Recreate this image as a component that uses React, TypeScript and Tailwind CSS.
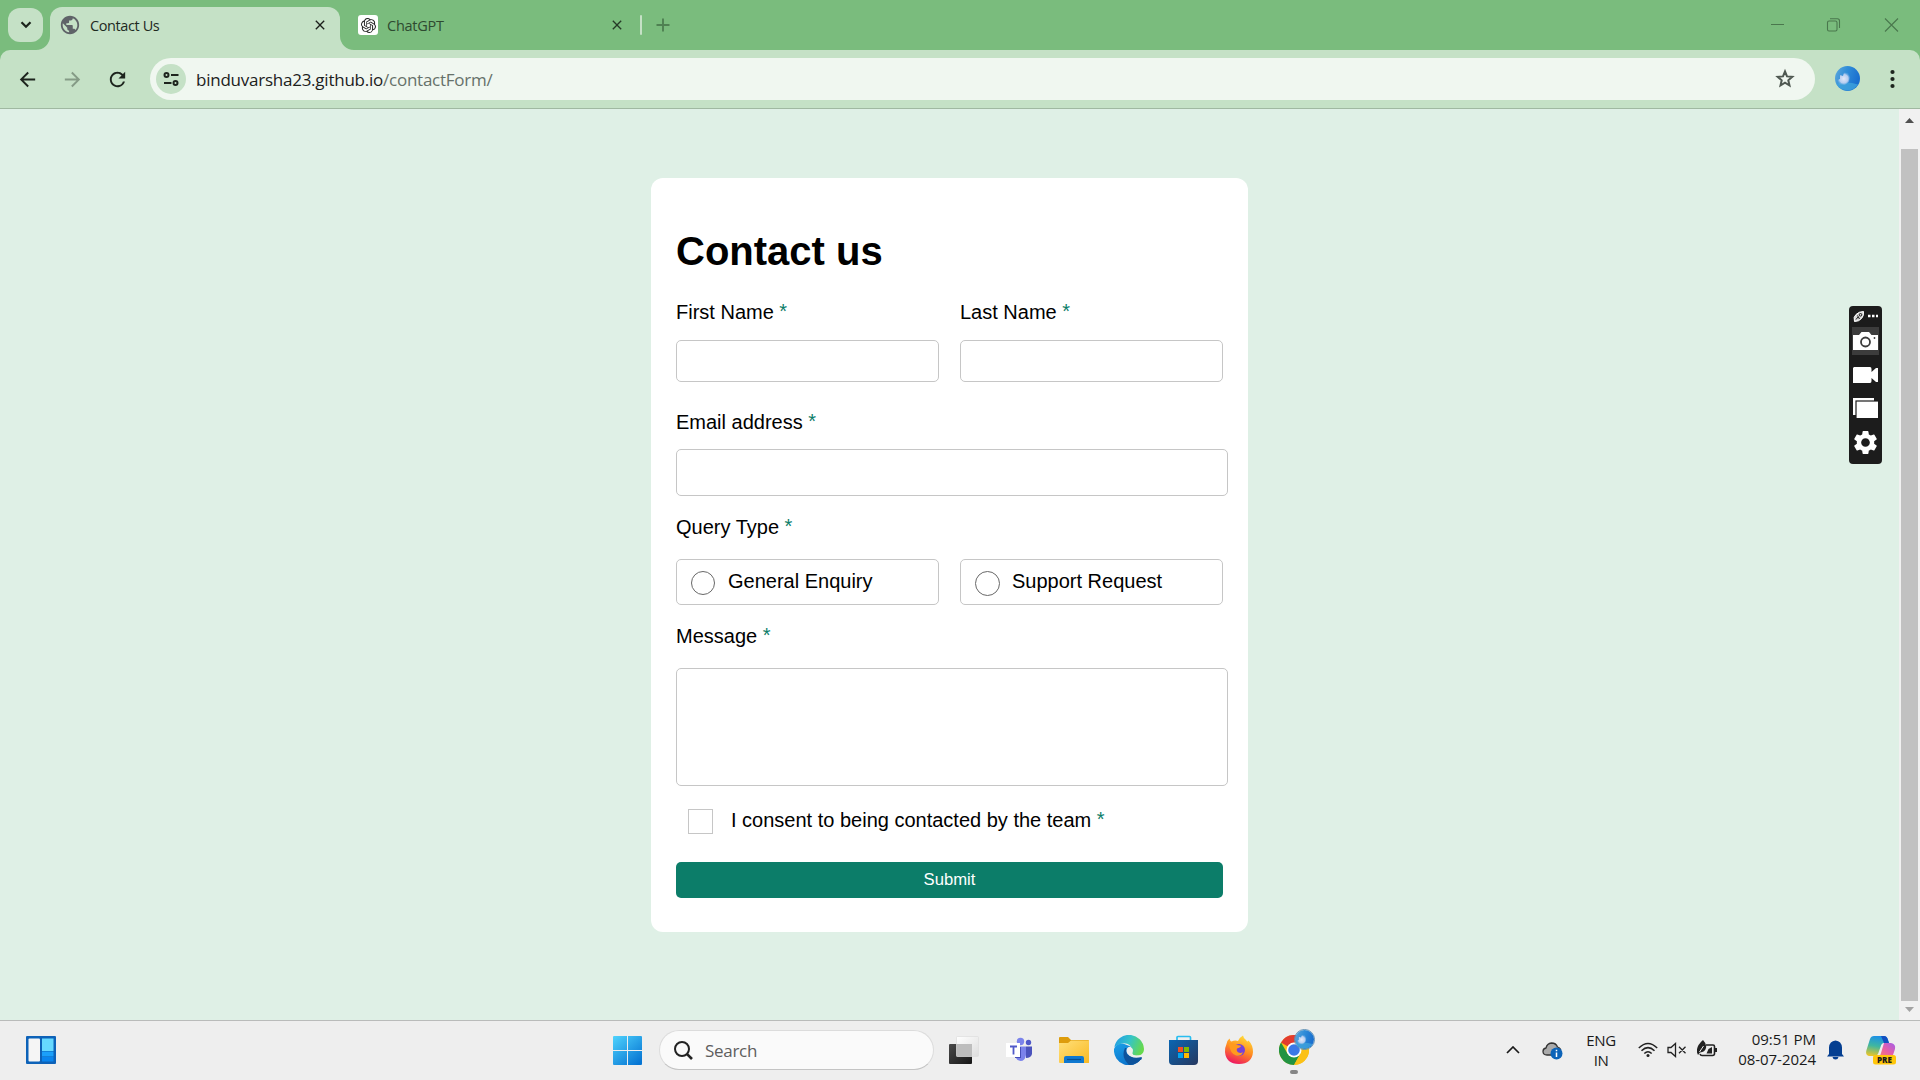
import React from "react";
import { MdPublic, MdArrowBack, MdArrowForward, MdRefresh, MdSettings, MdClose } from "react-icons/md";
import { SiOpenai } from "react-icons/si";

const ui = "font-['Open_Sans','Noto_Sans',sans-serif]";

function Avatar({ id, size }: { id: string; size: number }) {
  return (
    <svg width={size} height={size} viewBox="0 0 25 25">
      <defs>
        <linearGradient id={id} x1="0" y1="0" x2="1" y2="0.3">
          <stop offset="0" stopColor="#5ea9dc" />
          <stop offset="0.5" stopColor="#2f8cd8" />
          <stop offset="1" stopColor="#1a6fcf" />
        </linearGradient>
        <radialGradient id={id + "c"}>
          <stop offset="0" stopColor="#e3e8f8" />
          <stop offset="0.7" stopColor="#b6cdf0" />
          <stop offset="1" stopColor="#7fb6e6" stopOpacity=".3" />
        </radialGradient>
      </defs>
      <circle cx="12.5" cy="12.5" r="12.5" fill={`url(#${id})`} />
      <path d="M1.500 18Q12 15 23 18.500A12.5 12.5 0 0 1 1.500 18Z" fill="#3fa3dc" opacity=".8" />
      <path d="M5 9 8 10 9 6.500 13 7 15 11 14 16 10 19 4 18.500 2.500 14 5 13Z" fill={`url(#${id}c)`} />
    </svg>
  );
}

function TabStrip() {
  return (
    <div className="flex h-[50px] items-center bg-[#7abc7d] pl-2">
      <button className="flex h-[34px] w-[35px] items-center justify-center rounded-[12px] bg-[#c5e1c6]">
        <svg width="12" height="8" viewBox="0 0 12 8" fill="none" stroke="#1c241c" strokeWidth="2.2">
          <path d="M1.5 1.2 6 5.8 10.5 1.2" />
        </svg>
      </button>
      <div className="relative ml-[7px] flex h-[43px] w-[290px] items-center self-end rounded-t-[12px] bg-[#c5e1c6] pb-[7px] pl-[11px]">
        <svg className="absolute bottom-0 -left-[14px]" width="14" height="14">
          <path d="M14 0V14H0A14 14 0 0 0 14 0Z" fill="#c5e1c6" />
        </svg>
        <svg className="absolute -right-[14px] bottom-0" width="14" height="14">
          <path d="M0 0V14H14A14 14 0 0 1 0 0Z" fill="#c5e1c6" />
        </svg>
        <MdPublic className="-ml-[2px] size-[22px] text-[#5f6368]" />
        <span className={`${ui} mt-[2px] ml-[9px] w-[72px] text-[14.5px] leading-5 tracking-[-0.4px] whitespace-nowrap text-[#1e2a1f]`}>Contact Us</span>
        <MdClose className="ml-[150px] size-4 text-[#1b1f1b]" />
      </div>
      <div className="ml-[18px] flex size-5 items-center justify-center rounded-[3px] bg-white">
        <SiOpenai className="size-[15px] text-[#222]" />
      </div>
      <span className={`${ui} mt-[2px] ml-[9px] w-[61px] text-[14.5px] leading-5 tracking-[-0.25px] text-[#2e4a30]`}>ChatGPT</span>
      <MdClose className="ml-[161px] size-4 text-[#263a27]" />
      <div className="ml-[15px] h-5 w-[2px] rounded-full bg-[#c5e1c6]" />
      <svg className="ml-[13.5px]" width="14" height="14" stroke="#4f8152" strokeWidth="1.9">
        <path d="M7 .5V13.5M.5 7H13.5" />
      </svg>
      <svg className="mr-[21px] ml-auto" width="129" height="16" viewBox="0 0 129 16" fill="none" stroke="#4a774d" strokeWidth="1.1">
        <path d="M1 7.5H14M115 1.5 128 14.500M128 1.500 115 14.500" />
        <rect x="57.500" y="4" width="9.500" height="10" rx="1.500" />
        <path d="M60 1.700H67.500Q69.500 1.700 69.500 4V11" />
      </svg>
    </div>
  );
}

function Toolbar() {
  return (
    <div className="bg-[#7abc7d]">
      <div className="flex h-[59px] items-center rounded-t-[10px] border-b border-[#a0b8a1] bg-[#c5e1c6] pl-[16px]">
        <MdArrowBack className="size-[23px] text-[#1d241d]" />
        <MdArrowForward className="ml-[22px] size-[23px] text-[#859b86]" />
        <MdRefresh className="ml-[22px] size-[23px] text-[#1d241d]" />
        <div className="ml-[21px] flex h-[42px] w-[1665px] items-center rounded-full bg-[#f0f7f0] pr-[18px] pl-[6px]">
          <div className="flex size-[30px] items-center justify-center rounded-full bg-[#c5e1c6]">
            <svg width="18" height="16" viewBox="0 0 18 16" fill="none" stroke="#1d241d" strokeWidth="2">
              <circle cx="4.500" cy="4" r="2" />
              <path d="M9 4H16.500M2 12H9.500" />
              <circle cx="13.500" cy="12" r="2" />
            </svg>
          </div>
          <span className={`${ui} mt-px ml-[10px] flex-1 text-[17px] leading-6 tracking-[-0.24px] text-[#1c211c]`}>
            binduvarsha23.github.io<span className="text-[#66716a]">/contactForm/</span>
          </span>
          <svg width="24" height="24" viewBox="0 0 24 24" fill="none" stroke="#4f5851" strokeWidth="2">
            <path d="M12 4.500 14 9.400 19.300 9.850 15.300 13.300 16.500 18.500 12 15.750 7.500 18.500 8.700 13.300 4.700 9.850 10 9.400Z" />
          </svg>
        </div>
        <div className="-mt-px ml-[20px]">
          <Avatar id="top" size={25} />
        </div>
        <svg className="ml-[29px]" width="6" height="20" fill="#1d241d">
          <circle cx="3.500" cy="3" r="2.100" />
          <circle cx="3.500" cy="10" r="2.100" />
          <circle cx="3.500" cy="17" r="2.100" />
        </svg>
      </div>
    </div>
  );
}

function Label({ children }: { children: React.ReactNode }) {
  return (
    <div className="text-[20px] leading-[23px]">
      {children} <span className="inline-block -translate-y-px text-[#0c7d69]">*</span>
    </div>
  );
}

function ContactForm() {
  return (
    <form className="mt-[69px] ml-[651px] h-[754px] w-[597px] shrink-0 rounded-[12px] bg-white px-[25px] pt-[50px] font-['Liberation_Sans',Arial,sans-serif] text-black">
      <h1 className="text-[40px] leading-[46px] font-bold">Contact us</h1>
      <div className="mt-[27px] grid grid-cols-2 gap-x-[21px]">
        <Label>First Name</Label>
        <Label>Last Name</Label>
        <div className="mt-4 h-[42px] rounded-[5px] border border-[#c6c6c6]" />
        <div className="mt-4 h-[42px] rounded-[5px] border border-[#c6c6c6]" />
      </div>
      <div className="mt-[29px]">
        <Label>Email address</Label>
      </div>
      <div className="mt-[15px] h-[47px] w-[552px] rounded-[5px] border border-[#c6c6c6]" />
      <div className="mt-[20px]">
        <Label>Query Type</Label>
      </div>
      <div className="mt-[20px] grid grid-cols-2 gap-x-[21px] text-[20px] leading-[23px]">
        <div className="flex h-[46px] rounded-[5px] border border-[#c6c6c6] pt-[10px] pl-[14px]">
          <span className="mt-px size-[24px] rounded-full border border-[#686868]" />
          <span className="ml-[13px]">General Enquiry</span>
        </div>
        <div className="flex h-[46px] rounded-[5px] border border-[#c6c6c6] pt-[10px] pl-[14px]">
          <span className="mt-px size-[25px] rounded-full border border-[#686868]" />
          <span className="ml-[12px]">Support Request</span>
        </div>
      </div>
      <div className="mt-[20px]">
        <Label>Message</Label>
      </div>
      <div className="mt-[20px] h-[118px] w-[552px] rounded-[5px] border border-[#c6c6c6]" />
      <div className="mt-[23px] flex pl-[12px]">
        <span className="size-[25px] border border-[#c6c6c6]" />
        <div className="ml-[18px]">
          <Label>I consent to being contacted by the team</Label>
        </div>
      </div>
      <div className="mt-[28px] flex h-[36px] items-center justify-center rounded-[5px] bg-[#0c7d69] text-[16.670px] text-white">
        <span className="-mt-[2px]">Submit</span>
      </div>
    </form>
  );
}

function CaptureBar() {
  return (
    <div className="absolute top-[197px] left-[1849px] flex h-[158px] w-[33px] flex-col items-center rounded-[4px] bg-[#1c1c1c]">
      <svg className="mt-[4px]" width="25" height="13" fill="none" stroke="#fff">
        <path d="M1.500 11.500Q0 7 3 4.500Q6 1.500 10.500 1.500Q11 6 8.500 8.500Q6 11.500 1.500 11.500Z" fill="#d8d8d8" strokeWidth="1" />
        <path d="M3 9.500 5 7M6.500 9 4.500 5.500" stroke="#1c1c1c" strokeWidth="1" />
        <circle cx="7.500" cy="4.800" r="1.300" stroke="#1c1c1c" />
        <path d="M15 6h2.500M19 6h2.500M23 6h2" strokeWidth="2.500" />
      </svg>
      <div className="mt-[4px] flex h-[28px] w-[27px] justify-center bg-[#3c3c3c] pt-[5px]">
        <svg width="25" height="18">
          <path d="M0 3H6L8.500 0H16L18.500 3H25V18H0Z" fill="#fff" />
          <circle cx="12.500" cy="10" r="4.500" fill="#fff" stroke="#3c3c3c" strokeWidth="1.800" />
          <circle cx="21.500" cy="6" r=".9" fill="#3c3c3c" />
        </svg>
      </div>
      <svg className="mt-[12px]" width="25" height="16" fill="#fff">
        <path d="M1 0H17Q18.500 0 18.500 2V5L23 1H25V15H23L18.500 11V14Q18.500 16 17 16H0V1Z" />
      </svg>
      <svg className="mt-[15px]" width="25" height="20">
        <rect width="21" height="17" fill="#fff" />
        <rect x="3" y="3" width="23" height="18" fill="#fff" stroke="#1c1c1c" strokeWidth="1.200" />
      </svg>
      <MdSettings className="mt-[10px] size-[29px] text-white" />
    </div>
  );
}

function Scrollbar() {
  return (
    <div className="ml-auto flex w-[21px] flex-col items-center bg-[#f1f1f1] py-[9px]">
      <svg width="9" height="5" className="shrink-0 fill-[#505050]">
        <path d="M4.500 0 9 5H0Z" />
      </svg>
      <div className="mt-[26px] h-[852px] w-[17px] shrink-0 bg-[#c1c1c1]" />
      <svg width="9" height="5" className="mt-[6px] shrink-0 fill-[#a3a3a3]">
        <path d="M4.500 5 0 0H9Z" />
      </svg>
    </div>
  );
}

function AppIcons() {
  return (
    <>
      <svg className="ml-[16px]" width="30" height="30">
        <defs>
          <linearGradient id="tvd" x1="0" y1="0" x2="1" y2="1"><stop stopColor="#4a4a4a" /><stop offset="1" stopColor="#161616" /></linearGradient>
          <linearGradient id="tvl" x1="0" y1="0" x2="1" y2="1"><stop stopColor="#fff" /><stop offset="1" stopColor="#ddd" /></linearGradient>
        </defs>
        <rect x="0" y="9" width="23" height="20" rx="1" fill="url(#tvd)" />
        <rect x="7.500" y="1.500" width="22" height="20" rx="1" fill="url(#tvl)" stroke="#ddd" strokeWidth=".7" />
        <rect x="7.500" y="9" width="15.500" height="12.500" fill="#bdbdbd" />
      </svg>
      <svg className="ml-[27px]" width="26" height="30">
        <circle cx="14.500" cy="6.500" r="3.700" fill="#7b83eb" />
        <circle cx="22.500" cy="7.500" r="2.700" fill="#5059c9" />
        <path d="M20 11.500H26V19Q25 23 20 23Z" fill="#4b53bc" />
        <path d="M9 11.500H20V20Q19 26 14.500 26Q10 26 9 20Z" fill="#7b83eb" />
        <path d="M14 12V22H9" stroke="#464eb8" strokeWidth="2" fill="none" />
        <rect x="0" y="8" width="14" height="14" fill="#fff" />
        <path d="M4 11.500H11M7.500 11.500V19.500" stroke="#5059c9" strokeWidth="1.800" />
      </svg>
      <svg className="ml-[27px]" width="30" height="30">
        <defs><linearGradient id="fold" x1="0" y1="0" x2="1" y2="1"><stop stopColor="#ffe07a" /><stop offset="1" stopColor="#f9b923" /></linearGradient></defs>
        <path d="M0 3Q0 2 1 2H9L12 5H29Q30 5 30 6V12H0Z" fill="#dd9c0c" />
        <path d="M0 8H9L12 5.500H30V27.500Q30 28 29 28H1Q0 28 0 27Z" fill="url(#fold)" />
        <path d="M5 28V23Q5 21 7 21H23Q25 21 25 23V28Z" fill="#0f78d0" />
        <path d="M8 24.500H22" stroke="#084f91" strokeWidth="1.200" />
      </svg>
      <svg className="ml-[25px]" width="30" height="30" viewBox="0 0 30 30">
        <defs>
          <linearGradient id="edge1" x1="0" y1=".2" x2="1" y2=".5"><stop stopColor="#219ce5" /><stop offset=".5" stopColor="#35c4c7" /><stop offset="1" stopColor="#67d94c" /></linearGradient>
          <linearGradient id="edge2" x1="0" y1="0" x2=".6" y2="1"><stop stopColor="#1aa0e8" /><stop offset="1" stopColor="#0b6fc8" /></linearGradient>
        </defs>
        <path d="M0 14Q2 8 9 8.500L18 12 16 20 27.500 23.500A15 15 0 0 1 0 14Z" fill="url(#edge2)" />
        <path d="M.3 12A15 15 0 0 1 30 14C30 19 26 21 22 20.500C18 20 17.500 18.500 18.500 17C19.500 12 14 7.500 8 8.500Q3 9.500 .3 12Z" fill="url(#edge1)" />
        <path d="M11 13Q6.500 22 15 29.900Q23 30.500 27.800 23Q20 25.500 15 21.500Q11.500 18 12.500 13Z" fill="#0d539c" />
        <path d="M12.500 15.500Q13 11.500 16.500 11.800Q19.800 14 18.500 17Q17.500 20 22 20.700L28 20.300 27.800 23Q21 25 16 21.500Q12.300 18.500 12.500 15.500Z" fill="#eee" />
        <path d="M13.500 19Q18 24.500 27.800 22L27.500 24.500Q18 28 13.500 20Z" fill="#0d539c" />
      </svg>
      <svg className="ml-[25px]" width="29" height="30">
        <defs><linearGradient id="store" x1="0" y1="0" x2="1" y2="1"><stop stopColor="#0a66b3" /><stop offset="1" stopColor="#26385f" /></linearGradient></defs>
        <path d="M8 6V2.500Q8 1.500 9 1.500H20.500Q21.500 1.500 21.500 2.500V6" fill="none" stroke="#28bdf0" strokeWidth="1.700" />
        <path d="M0 5H29V26Q29 30 25 30H4Q0 30 0 26Z" fill="url(#store)" />
        <rect x="9" y="12" width="5" height="5" fill="#f25022" />
        <rect x="15" y="12" width="5" height="5" fill="#7fba00" />
        <rect x="9" y="18" width="5" height="5" fill="#00a4ef" />
        <rect x="15" y="18" width="5" height="5" fill="#ffb900" />
      </svg>
      <svg className="ml-[27px]" width="28" height="30">
        <defs>
          <linearGradient id="fx" x1=".7" y1="0" x2=".3" y2="1"><stop stopColor="#ffdf3a" /><stop offset=".5" stopColor="#ff8a20" /><stop offset="1" stopColor="#ed1164" /></linearGradient>
        </defs>
        <path d="M1.500 9Q2 5.500 4.500 3.500Q5 6 6.500 6.500Q10 5 13 6Q15 2 18 .5Q18.500 3.500 21 5Q22 6.500 22.500 6.500L23.500 5.500Q28 10 28 17Q27 29 14 29Q1 29 0 17Q0 12 1.500 9Z" fill="url(#fx)" />
        <circle cx="14" cy="15" r="6" fill="#7542d8" />
        <path d="M4 9Q8 7 12 10Q16 10 16 11.500Q14 13 12 13.500Q11 16 13.500 17.500Q16 18.500 18 17Q16 22 11 20.500Q5 18.500 4 9Z" fill="#ff9b1e" />
      </svg>
      <div className="relative ml-[26px] h-[30px] w-[30px]">
        <svg width="30" height="30">
          <circle cx="15" cy="15" r="15" fill="#fbc116" />
          <path d="M15 15 2 7.500A15 15 0 0 1 28 7.500L15 7.500Z" fill="#e33b2e" />
          <path d="M2 7.500A15 15 0 0 0 15 30L21.500 18.500 15 15 8.500 18.500Z" fill="#229342" />
          <path d="M15 7.500H28A15 15 0 0 1 15 30L21.500 18.500Z" fill="#fbc116" />
          <circle cx="15" cy="15" r="7.500" fill="#fff" />
          <circle cx="15" cy="15" r="5.800" fill="#3b78e7" />
        </svg>
        <div className="absolute -top-[6px] left-[15px] rounded-full border border-[#5d8fb5]">
          <Avatar id="task" size={19} />
        </div>
        <div className="absolute top-[35px] left-[11px] h-[4px] w-[8px] rounded-full bg-[#858585]" />
      </div>
    </>
  );
}

function Tray() {
  return (
    <div className="ml-auto flex items-center text-[#1a1a1a]">
      <svg width="14" height="8" fill="none" stroke="#1a1a1a" strokeWidth="1.700"><path d="M1 7 7 1 13 7" /></svg>
      <svg className="ml-[22px]" width="21" height="20">
        <path d="M5 15Q1 15 1 11.500Q1 8.500 4 8Q5 3.500 9.500 3Q14 3 15.500 7Q19 8 18.500 11L14 15Z" fill="#aaa" stroke="#333" strokeWidth="1.300" />
        <circle cx="14.500" cy="13.500" r="6" fill="#0c63b8" />
        <path d="M14.500 12.500V17M14.500 9.800V11.300" stroke="#fff" strokeWidth="1.500" />
      </svg>
      <div className={`${ui} ml-[22px] w-[32px] text-center text-[15px] leading-[20px] tracking-[-0.4px]`}>
        ENG
        <br />
        IN
      </div>
      <svg className="ml-[21px]" width="20" height="16" fill="none" stroke="#222" strokeWidth="1.500">
        <path d="M.8 6Q10-3 19.200 6M3.500 8.800Q10 2.500 16.500 8.800M6.300 11.500Q10 8 13.700 11.500" />
        <circle cx="10" cy="13.500" r="1.500" fill="#222" stroke="none" />
      </svg>
      <svg className="ml-[9px]" width="20" height="16" fill="none" stroke="#222" strokeWidth="1.300">
        <path d="M1 5.500H4L8.500 1.500V14.500L4 10.500H1ZM12 4.800 18.500 11.300M18.500 4.800 12 11.300" />
      </svg>
      <svg className="-mt-[2px] ml-[10px]" width="21" height="18">
        <path d="M9 5H16Q17.500 5 17.500 6.500V13.500Q17.500 15.500 15.500 15.500H5Q3.500 15.500 3 14" fill="none" stroke="#222" strokeWidth="1.600" />
        <rect x="18" y="8" width="2" height="4" fill="#222" />
        <path d="M9.500 13.500 11.500 9 15 7V13.500Z" fill="#222" />
        <path d="M0 12.500Q-1 6 6 0Q10 4 9 8Q8 12 3 12.500L1 15Z" fill="#222" />
        <path d="M2.500 12 6.500 6" stroke="#eee" strokeWidth="1" />
      </svg>
      <div className={`${ui} -mt-[3px] ml-[14px] w-[84px] text-right text-[15px] leading-[20px] tracking-[-0.05px] whitespace-nowrap`}>
        09:51 PM
        <br />
        08-07-2024
      </div>
      <svg className="ml-[11px]" width="17" height="20" fill="#053f91">
        <path d="M2 14V7.500Q2.500 1 8.500 .5Q14.500 1 15 7.500V14L17 16.500H0ZM5.500 17H11.500Q11 19.500 8.500 19.500Q6 19.500 5.500 17Z" />
      </svg>
      <svg className="mr-[24px] ml-[22px]" width="30" height="30">
        <defs>
          <linearGradient id="cp1" x1=".5" y1="0" x2=".3" y2="1"><stop stopColor="#1b8fe8" /><stop offset=".5" stopColor="#3fb7a0" /><stop offset="1" stopColor="#e9c529" /></linearGradient>
          <linearGradient id="cp2" x1="1" y1="0" x2="0" y2="1"><stop stopColor="#a35de8" /><stop offset=".5" stopColor="#e95fa5" /><stop offset="1" stopColor="#fb8b5e" /></linearGradient>
        </defs>
        <path d="M8 1H18Q21 1 22 5L23 8H18Q15.500 8 14.500 12L12 19Q11 21 8 21H3Q-1 20 .5 15L4 4Q5 1 8 1Z" fill="url(#cp1)" />
        <path d="M15 1H18Q21 1 22 5L23 8H18Z" fill="#124fc0" />
        <path d="M18 8H25Q30 9 29 14L26 23H11Q14 22 15 18Z" fill="url(#cp2)" />
        <rect x="7" y="20" width="23" height="9.500" rx="2.500" fill="#ffc60a" />
        <text x="18.500" y="27.600" textAnchor="middle" fontFamily="Open Sans" fontWeight="800" fontSize="8" fill="#1a1a1a">PRE</text>
      </svg>
    </div>
  );
}

function Taskbar() {
  return (
    <div className="flex h-[60px] items-center border-t border-[#b9bbba] bg-[#eee] pb-px pl-[26px]">
      <svg width="30" height="28">
        <rect width="30" height="28" rx="1" fill="#0d62b8" />
        <rect x="2.500" y="2.500" width="11.500" height="23" rx="1" fill="#f5f5f5" />
        <rect x="16" y="2.500" width="11.500" height="12.500" fill="#66d9ff" />
        <rect x="16" y="15.500" width="11.500" height="5" fill="#1ba0fa" />
        <rect x="16" y="21" width="11.500" height="4.500" fill="#0a85ee" />
      </svg>
      <svg className="ml-[557px]" width="29" height="29">
        <defs><linearGradient id="win" gradientUnits="userSpaceOnUse" x1="0" y1="0" x2="24" y2="29"><stop stopColor="#4fd3fd" /><stop offset="1" stopColor="#0675d3" /></linearGradient></defs>
        <path d="M1 0H14V14H0V1Q0 0 1 0ZM15 0H28Q29 0 29 1V14H15ZM0 15H14V29H1Q0 29 0 28ZM15 15H29V28Q29 29 28 29H15Z" fill="url(#win)" />
      </svg>
      <div className="mr-[-1px] ml-[17px] flex h-[40px] w-[275px] items-center rounded-full border border-[#dcdcdc] border-b-[#c4c4c4] bg-[#fafafa] pl-[14px]">
        <svg width="19" height="19" fill="none" stroke="#222" strokeWidth="2">
          <circle cx="8" cy="8" r="7" />
          <path d="M12.800 12.800 18 18" strokeWidth="2.600" />
        </svg>
        <span className={`${ui} mt-[2px] ml-[12px] text-[17px] tracking-[-0.3px] text-[#5e5e5e]`}>Search</span>
      </div>
      <AppIcons />
      <Tray />
    </div>
  );
}

export default function App() {
  return (
    <div className="flex h-[1080px] w-[1920px] flex-col overflow-hidden">
      <TabStrip />
      <Toolbar />
      <main className="relative flex h-[911px] bg-[#dff0e6]">
        <ContactForm />
        <CaptureBar />
        <Scrollbar />
      </main>
      <Taskbar />
    </div>
  );
}
